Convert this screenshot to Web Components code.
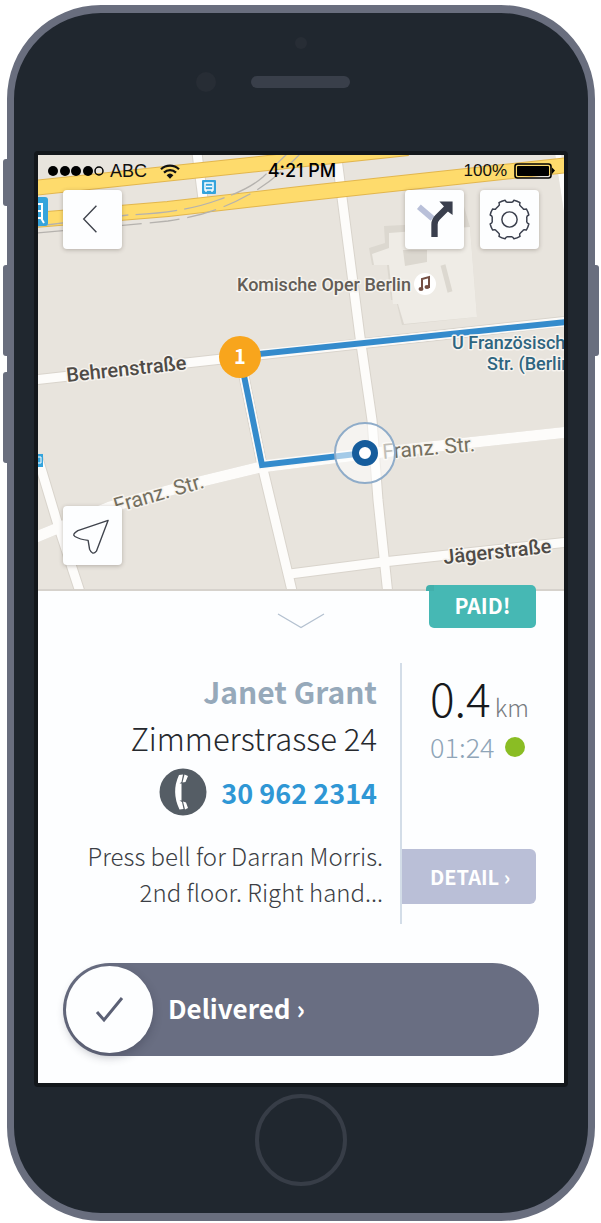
<!DOCTYPE html>
<html lang="en">
<head>
<meta charset="utf-8">
<meta name="viewport" content="width=device-width, initial-scale=1">
<title>Delivery</title>
<style>
  body { margin: 0; background: #fff; font-family: "Noto Sans CJK SC", "Noto Sans", sans-serif; }
</style>
</head>
<body>
<phone-frame>
  <map-view>
    <status-bar slot="status" carrier="ABC" time="4:21 PM" battery="100%"></status-bar>
    <map-button slot="start" icon="back" label="Back"></map-button>
    <map-button slot="end" icon="route" label="Directions"></map-button>
    <map-button slot="end" icon="gear" label="Settings"></map-button>
    <map-button slot="bottom" icon="locate" label="My location"></map-button>
  </map-view>
  <order-panel>
    <span slot="badge">PAID!</span>
    <delivery-info>
      <span slot="name">Janet Grant</span>
      <span slot="address">Zimmerstrasse 24</span>
      <a slot="phone" href="tel:309622314">30 962 2314</a>
      <span slot="note">Press bell for Darran Morris.<br>2nd floor. Right hand...</span>
    </delivery-info>
    <trip-info slot="side" distance="0.4" unit="km" time="01:24"></trip-info>
    <slide-action slot="action">Delivered ›</slide-action>
  </order-panel>
</phone-frame>

<script>
const define = (name, html, setup) => {
  const template = document.createElement('template');
  template.innerHTML = html;
  customElements.define(name, class extends HTMLElement {
    constructor() {
      super();
      this.attachShadow({ mode: 'open' }).append(template.content.cloneNode(true));
    }
    connectedCallback() { if (setup) setup(this, this.shadowRoot); }
  });
};

define('phone-frame', `
<style>
  :host { display: block; padding: 5px 6px 2px 7px; }
  .case { position: relative; background: #20272f; border: solid #696e7e; border-width: 8px 7px; border-radius: 94px; padding: 0 20px; }
  .key { position: absolute; width: 5px; height: 91px; background: #696e7e; }
  .left { left: -11px; border-radius: 3px 0 0 3px; }
  .right { right: -11px; border-radius: 0 3px 3px 0; }
  .mute { top: 146px; height: 47px; }
  .up { top: 252px; }
  .down { top: 359px; }
  .top { display: flex; justify-content: center; height: 138px; }
  .screen { border: 4px solid #13171b; border-radius: 4px; background: #fdfeff; }
  .bottom { display: flex; justify-content: center; padding: 7px 0 27px; }
  .home { box-sizing: border-box; width: 92px; height: 92px; border: 4px solid #373d47; border-radius: 50%; background: none; padding: 0; }
</style>
<div class="case">
  <div class="key left mute"></div><div class="key left up"></div><div class="key left down"></div><div class="key right up"></div>
  <div class="top">
    <svg width="240" height="138" viewBox="0 0 240 138" aria-hidden="true">
      <circle cx="120" cy="30" r="6" fill="#272d35"/><circle cx="25" cy="69" r="10" fill="#272d35"/>
      <rect x="70" y="63" width="99" height="12" rx="6" fill="#393f4a"/>
    </svg>
  </div>
  <div class="screen"><slot></slot></div>
  <div class="bottom"><button class="home" aria-label="Home"></button></div>
</div>`);

define('status-bar', `
<style>
  :host { display: grid; grid-template-columns: 1fr auto 1fr; align-items: center; height: 32px; padding: 0 8px 0 10px; font: 18px/32px "Liberation Sans", Arial, sans-serif; color: #111; }
  .side { display: flex; align-items: center; gap: 5px; }
  .end { justify-content: flex-end; font-size: 17px; gap: 7px; }
  .time { font-family: Inter, sans-serif; font-weight: 500; font-size: 18px; color: #000; }
  .wifi { margin-left: 8px; }
</style>
<div class="side">
  <svg width="57" height="12" viewBox="0 0 57 12" aria-label="Signal"><g><circle cx="5" cy="6" r="5"/><circle cx="17" cy="6" r="5"/><circle cx="28" cy="6" r="5"/><circle cx="40" cy="6" r="5"/><circle cx="51" cy="6" r="4" fill="none" stroke="#000" stroke-width="1.5"/></g></svg>
  <span class="carrier"></span>
  <svg class="wifi" width="20" height="15" viewBox="0 0 20 15" fill="none" stroke="#111" stroke-width="2.2"><path d="M1 5.2A13 13 0 0 1 19 5.2M4 8.6A8.6 8.6 0 0 1 16 8.6"/><path d="M6.6 11.2A5 5 0 0 1 13.4 11.2L10 14.8Z" fill="#111" stroke="none"/></svg>
</div>
<span class="time"></span>
<div class="side end"><span class="battery"></span>
  <svg width="42" height="16" viewBox="0 0 42 16"><rect x="1" y="1" width="36" height="14" rx="2.5" fill="none" stroke="#000" stroke-width="1.6"/><rect x="3" y="3" width="32" height="10" rx="1"/><path d="M38 4.5L41 7.5L38 11Z"/></svg>
</div>`, (el, root) => {
  for (const key of ['carrier', 'time', 'battery']) root.querySelector('.' + key).textContent = el.getAttribute(key);
});

const gearPath = (() => {
  const point = (deg, r) => {
    const a = deg * Math.PI / 180;
    return (22 + r * Math.sin(a)).toFixed(2) + ' ' + (22 - r * Math.cos(a)).toFixed(2);
  };
  let d = '';
  for (let a = 0; a < 360; a += 45) {
    d += (a ? 'A20.5 20.5 0 0 1 ' : 'M') + point(a - 13, 20.3) + 'Q' + point(a - 11, 17.6) + ' ' + point(a - 6, 17.8)
       + 'L' + point(a + 6, 17.8) + 'Q' + point(a + 11, 17.6) + ' ' + point(a + 13, 20.3);
  }
  return d + 'A20.5 20.5 0 0 1 ' + point(-13, 20.3) + 'Z';
})();

const icons = {
  back: '<path d="M26 8L13 21.500L26 35" fill="none" stroke="#3f434c" stroke-width="1.4"/>',
  route: '<path d="M6 9L20 21" stroke="#b9c0d9" stroke-width="6"/><path d="M22 40V27Q22 23 25 20L36 9" fill="none" stroke="#3a3f4d" stroke-width="6.500"/><path d="M27 3.500H40.500V17.500L36 14L31 8Z" fill="#3a3f4d"/>',
  gear: '<g fill="none" stroke="#3a3f4d" stroke-width="1.500" stroke-linejoin="round"><path d="' + gearPath + '"/><circle cx="22" cy="22" r="7.800"/></g>',
  locate: '<path d="M38 6.500L7 17Q0.500 21 4 23Q9 26 17.500 27L19 36Q22 43 26 38Q31 25 38 6.500Z" fill="none" stroke="#3f434c" stroke-width="1.400" stroke-linejoin="round"/>'
};

define('map-button', `
<style>
  :host { display: block; }
  button { display: grid; place-items: center; width: 59px; height: 59px; padding: 0; border: 0; border-radius: 4px; background: #fdfeff; box-shadow: 0 1px 4px rgba(60,50,40,.3); }
</style>
<button><svg width="43" height="43" viewBox="0 0 44 44" aria-hidden="true"></svg></button>`, (el, root) => {
  root.querySelector('button').setAttribute('aria-label', el.getAttribute('label'));
  root.querySelector('svg').innerHTML = icons[el.getAttribute('icon')];
});

define('map-view', `
<style>
  :host { display: grid; overflow: hidden; }
  .map, .overlay { grid-area: 1 / 1; }
  .map { display: block; width: 100%; height: auto; }
  .overlay { display: flex; flex-direction: column; z-index: 1; }
  .bar { display: flex; gap: 16px; padding: 3px 25px; }
  .bar .space { flex: 1; }
  .low { margin-top: auto; padding-bottom: 26px; }
  text { font-family: Roboto, sans-serif; font-weight: 500; font-size: 18px; fill: #625d57; stroke: #f6f3ee; stroke-width: 3; stroke-linejoin: round; paint-order: stroke; }
  .street { font-size: 20px; fill: #4f4b47; }
  .minor { font-size: 21px; font-weight: 400; fill: #757060; }
  .station { fill: #2e6580; }
</style>
<svg class="map" viewBox="0 0 526 436">
  <defs>
    <g id="streets" fill="none">
      <path d="M159 -2L165 44"/><path d="M298 -4L322 182L334 265L340 345L350 440"/><path d="M520 -2L530 64" stroke-width="6"/>
      <path d="M-4 225L202 202L530 166"/><path d="M-4 383L20 373L72 352L165 326L223 312L327 299L530 277" stroke-width="11"/>
      <path d="M-1 300L20 370L43 440"/><path d="M202 202L224 310L255 440"/><path d="M252 419L345 407L530 387"/>
    </g>
    <g id="bus"><rect width="14" height="14" rx="1" fill="#35a4dc"/><path d="M3 3H11V10H3Z" fill="none" stroke="#fff" stroke-width="1.500"/><path d="M4 6.500H10M4 10V12M10 10V12" stroke="#fff" stroke-width="1.300"/></g>
  </defs>
  <rect width="526" height="436" fill="#e8e4dd"/>
  <path d="M346 71L423 67L425 48L432 72L439 162L364 170L358 145L353 145L349 110L334 110L331 93L347 88Z" fill="#dcd8d0"/>
  <path d="M351 78L432 72L439 162L366 169L360 149L355 149L351 110L336 110L334 99L351 93Z" fill="#efece6"/>
  <path d="M365 95H389V107L367 111Z" fill="#dcd8d0"/><path d="M405 110L412 137" stroke="#dcd8d0" stroke-width="5"/>
  <use href="#streets" stroke="#d9d4cc" stroke-width="11"/>
  <use href="#streets" stroke="#fdfcfa" stroke-width="9"/>
  <g fill="none" stroke="#e2b64e" stroke-width="16"><path d="M-4 33L370 -7"/><path d="M-4 65L130 54L262 39L530 10"/></g>
  <g fill="none" stroke="#fedb6c" stroke-width="14"><path d="M-4 33L370 -7"/><path d="M-4 65L130 54L262 39L530 10"/></g>
  <g fill="none" stroke="#b5b2ae" stroke-width="1.300"><path d="M-2 78Q70 72 130 66Q175 60 210 40Q235 27 263 -2" stroke-dasharray="30 8"/><path d="M0 71L90 60Q145 58 180 45Q210 35 225 22L250 -2" stroke-dasharray="42 7"/></g>
  <use href="#bus" x="164" y="25"/>
  <path d="M0 42H7Q10 42 10 45V68Q10 71 7 71H0Z" fill="#35a4dc"/><path d="M0 49H4V63H0M3 63L6 68M0 56H4" fill="none" stroke="#fff" stroke-width="2"/>
  <path d="M0 299H5V312H0Z" fill="#35a4dc"/><path d="M0 302H3V308H0" fill="none" stroke="#fff"/>
  <path d="M528 167L202 201L224 310L327 298" fill="none" stroke="#fbfaf8" stroke-width="9"/>
  <path d="M528 167L202 201L224 310L327 298" fill="none" stroke="#348bcc" stroke-width="6"/>
  <text x="199" y="136">Komische Oper Berlin</text>
  <circle cx="387" cy="129" r="11" fill="#fff"/><path d="M384 134V124L391 122V133" fill="none" stroke="#744f43" stroke-width="2"/><ellipse cx="383" cy="134" rx="2.500" ry="2" fill="#744f43"/><ellipse cx="389" cy="132" rx="2.500" ry="2" fill="#744f43"/>
  <text class="street" x="29" y="227" transform="rotate(-6 29 227)">Behrenstraße</text>
  <text class="minor" x="78" y="358" transform="rotate(-16 78 358)">Franz. Str.</text>
  <text class="minor" x="345" y="304" transform="rotate(-5 345 304)">Franz. Str.</text>
  <text class="street" x="406" y="409" transform="rotate(-6 406 409)">Jägerstraße</text>
  <text class="station" x="414" y="194">U Französisch</text>
  <text class="station" x="449" y="215">Str. (Berlin</text>
  <circle cx="202" cy="202" r="21" fill="#f8a51c"/>
  <text x="202" y="209" text-anchor="middle" style="font:700 20px 'Noto Sans CJK SC',sans-serif;fill:#fff;stroke:none">1</text>
  <circle cx="327" cy="298" r="30" fill="#fff" fill-opacity=".55" stroke="#8facc9" stroke-width="2"/>
  <circle cx="327" cy="298" r="9.500" fill="#fff" stroke="#155c9c" stroke-width="7"/>
  <path d="M0 435H526" stroke="#d6d2cc" stroke-width="2"/>
</svg>
<div class="overlay">
  <slot name="status"></slot>
  <div class="bar"><slot name="start"></slot><div class="space"></div><slot name="end"></slot></div>
  <div class="bar low"><slot name="bottom"></slot></div>
</div>`);

define('order-panel', `
<style>
  :host { display: block; position: relative; z-index: 2; }
  .badge { position: absolute; right: 28px; top: -6px; width: 107px; padding-bottom: 3px; border-radius: 3px 5px 5px 5px; background: #46b8b4; color: #fff; text-align: center; font-size: 21px; font-weight: 700; line-height: 40px; }
  .badge::before { content: ""; position: absolute; left: -3px; top: 0; width: 8px; height: 6px; border-radius: 4px 0 0 0; background: #42b0ac; }
  .handle { display: block; margin: 0 auto; height: 72px; padding: 0; border: 0; background: none; }
  .handle svg { display: block; }
  .columns { display: grid; grid-template-columns: 1fr 164px; min-height: 261px; }
  .action { padding: 39px 25px 27px; }
</style>
<div class="badge"><slot name="badge"></slot></div>
<button class="handle" aria-label="Collapse"><svg width="48" height="72" viewBox="0 0 48 72" fill="none" stroke="#b4c1d0" stroke-width="1.300"><path d="M1 23L24 36.500L47 23"/></svg></button>
<div class="columns"><slot></slot><slot name="side"></slot></div>
<div class="action"><slot name="action"></slot></div>`);

define('delivery-info', `
<style>
  :host { display: block; padding: 5px 17px 0 24px; text-align: right; color: #26292e; }
  .name, .address, .phone { padding-right: 6px; }
  .name { font-size: 30px; line-height: 46px; font-weight: 700; color: #96a9ba; }
  .address { font-size: 31px; line-height: 48px; font-weight: 300; }
  .phone { display: flex; align-items: center; justify-content: flex-end; gap: 14px; height: 60px; font-size: 27px; font-weight: 700; }
  ::slotted(a) { color: #2f97d5; text-decoration: none; }
  .note { margin-top: 16px; font-size: 24px; line-height: 36px; font-weight: 300; color: #3c3f45; }
</style>
<div class="name"><slot name="name"></slot></div>
<div class="address"><slot name="address"></slot></div>
<div class="phone">
  <svg width="48" height="48" viewBox="0 0 48 48" aria-hidden="true"><circle cx="24" cy="24" r="23.500" fill="#555d65"/><path d="M20 7L24 6.500L22.500 14L20.500 15.500H22.500V32.500H20.500L23 34L24.500 41L20.500 41.500Q12 24 20 7Z" fill="#fff"/><path d="M25.500 6.500L29 8L26.500 14L23.500 14.500ZM24 33.500L27 34.500L29 40L26 41.500Z" fill="#fff"/></svg>
  <slot name="phone"></slot>
</div>
<div class="note"><slot name="note"></slot></div>`);

define('trip-info', `
<style>
  :host { display: flex; flex-direction: column; align-items: flex-start; box-sizing: border-box; padding: 4px 28px 20px 0; border-left: 2px solid #d3dde8; }
  .distance { display: flex; align-items: baseline; gap: 4px; height: 60px; padding-left: 28px; font-size: 46px; line-height: 60px; font-weight: 300; color: #17191c; white-space: nowrap; }
  .unit { font-size: 24px; color: #777b80; }
  .time { display: flex; align-items: center; gap: 10px; padding-left: 28px; font-size: 27px; line-height: 40px; font-weight: 300; color: #8fa5b8; }
  .dot { width: 20px; height: 20px; border-radius: 50%; background: #8abd24; }
  button { align-self: stretch; margin-top: auto; height: 55px; padding: 0 0 0 28px; border: 0; border-radius: 0 6px 6px 0; background: #babfd7; color: #fff; text-align: left; font-family: inherit; font-size: 20px; font-weight: 700; }
</style>
<div class="distance"><span class="value"></span><span class="unit"></span></div>
<div class="time"><span class="clock"></span><span class="dot"></span></div>
<button>DETAIL ›</button>`, (el, root) => {
  root.querySelector('.value').textContent = el.getAttribute('distance');
  root.querySelector('.unit').textContent = el.getAttribute('unit');
  root.querySelector('.clock').textContent = el.getAttribute('time');
});

define('slide-action', `
<style>
  :host { display: block; }
  button { display: flex; align-items: center; gap: 15px; width: 100%; height: 93px; padding: 0 3px; border: 0; border-radius: 47px; background: #696e82; color: #fff; font-family: inherit; font-size: 26px; font-weight: 700; }
  .label { padding-bottom: 5px; }
  .knob { display: grid; place-items: center; width: 87px; height: 87px; border-radius: 50%; background: #fdfeff; box-shadow: 0 4px 10px rgba(40,44,60,.3); }
</style>
<button><span class="knob"><svg width="32" height="32" viewBox="0 0 32 32" fill="none" stroke="#5b6075" stroke-width="3"><path d="M3 18L10 26L28 4"/></svg></span><span class="label"><slot></slot></span></button>`);
</script>
</body>
</html>
